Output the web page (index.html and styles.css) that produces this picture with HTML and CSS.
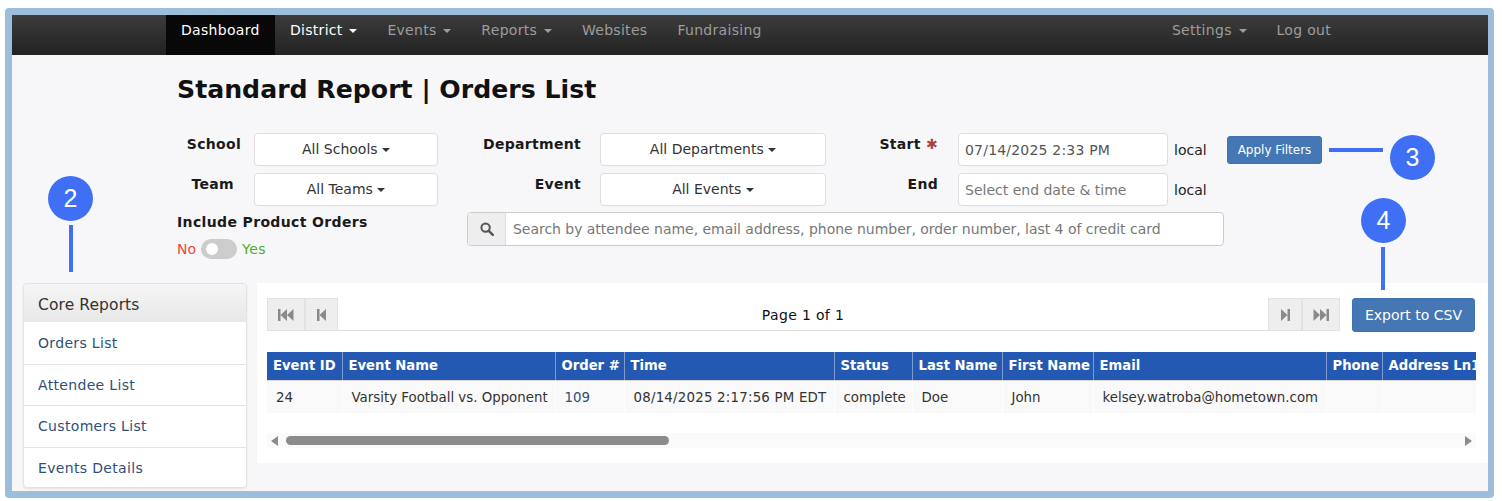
FILE: index.html
```html
<!DOCTYPE html>
<html lang="en">
<head>
<meta charset="utf-8">
<title>Standard Report | Orders List</title>
<link rel="stylesheet" href="styles.css">
</head>
<body>
<div class="frame">
  <nav class="nav">
    <div class="nav-group">
      <a class="nav-item active">Dashboard</a>
      <a class="nav-item bright">District <i class="caret"></i></a>
      <a class="nav-item">Events <i class="caret"></i></a>
      <a class="nav-item">Reports <i class="caret"></i></a>
      <a class="nav-item">Websites</a>
      <a class="nav-item">Fundraising</a>
    </div>
    <div class="nav-group">
      <a class="nav-item">Settings <i class="caret"></i></a>
      <a class="nav-item">Log out</a>
    </div>
  </nav>

  <main class="content">
    <h1 class="title">Standard Report | Orders List</h1>
    <div class="filters">
      <label class="flabel pad-a">School</label>
      <button class="select">All Schools <i class="caret small"></i></button>
      <label class="flabel pad-b">Department</label>
      <button class="select">All Departments <i class="caret small"></i></button>
      <label class="flabel pad-c">Start <span class="req">✱</span></label>
      <div class="input value">07/14/2025 2:33 PM</div>
      <span class="local">local</span>
      <button class="apply">Apply Filters</button>

      <label class="flabel pad-a team">Team</label>
      <button class="select">All Teams <i class="caret small"></i></button>
      <label class="flabel pad-b">Event</label>
      <button class="select">All Events <i class="caret small"></i></button>
      <label class="flabel pad-c">End</label>
      <div class="input">Select end date &amp; time</div>
      <span class="local">local</span>
      <span></span>

      <div class="product">
        <div class="product-title">Include Product Orders</div>
        <div class="toggle-row">
          <span class="no">No</span>
          <span class="toggle"><span class="knob"></span></span>
          <span class="yes">Yes</span>
        </div>
      </div>
      <div class="search">
        <span class="search-addon">
          <svg width="14" height="14" viewBox="0 0 14 14"><circle cx="5.6" cy="5.6" r="4.2" fill="none" stroke="#555" stroke-width="2"/><path d="M8.8 8.8 12.8 12.8" stroke="#555" stroke-width="2.4" stroke-linecap="round"/></svg>
        </span>
        <span class="search-text">Search by attendee name, email address, phone number, order number, last 4 of credit card</span>
      </div>
    </div>

    <div class="lower">
      <aside class="side">
        <div class="side-head">Core Reports</div>
        <a class="side-link">Orders List</a>
        <a class="side-link">Attendee List</a>
        <a class="side-link">Customers List</a>
        <a class="side-link">Events Details</a>
      </aside>

      <section class="panel">
        <div class="pager">
          <button class="pg pg-first">
            <svg width="16" height="12" viewBox="0 0 16 12"><path d="M0 0h2.500v12H0zM9 0v12L2.500 6zM15.500 0v12L9 6z" fill="#8a8a8a"/></svg>
          </button>
          <button class="pg pg-prev">
            <svg width="9" height="12" viewBox="0 0 9 12"><path d="M0 0h2.500v12H0zM9 0v12L2.500 6z" fill="#8a8a8a"/></svg>
          </button>
          <div class="pg-label">Page 1 of 1</div>
          <button class="pg pg-next">
            <svg width="9" height="12" viewBox="0 0 9 12"><path d="M9 0H6.500v12H9zM0 0v12L6.500 6z" fill="#8a8a8a"/></svg>
          </button>
          <button class="pg pg-first">
            <svg width="16" height="12" viewBox="0 0 16 12"><path d="M16 0h-2.500v12H16zM7 0v12L13.500 6zM.5 0v12L7 6z" fill="#8a8a8a"/></svg>
          </button>
          <button class="export">Export to CSV</button>
        </div>

        <div class="table-wrap">
          <table class="orders">
            <colgroup>
              <col class="c-id"><col class="c-name"><col class="c-order"><col class="c-time"><col class="c-status"><col class="c-last"><col class="c-first"><col class="c-email"><col class="c-phone"><col class="c-addr">
            </colgroup>
            <thead>
              <tr>
                <th>Event ID</th><th>Event Name</th><th>Order #</th><th>Time</th><th>Status</th><th>Last Name</th><th>First Name</th><th>Email</th><th class="right">Phone</th><th>Address Ln1</th>
              </tr>
            </thead>
            <tbody>
              <tr>
                <td>24</td><td>Varsity Football vs. Opponent</td><td><a class="order-link">109</a></td><td class="time">08/14/2025 2:17:56 PM EDT</td><td>complete</td><td>Doe</td><td>John</td><td>kelsey.watroba@hometown.com</td><td></td><td></td>
              </tr>
            </tbody>
          </table>
        </div>

        <div class="hscroll">
          <i class="arrow-left"></i>
          <span class="thumb"></span>
          <i class="arrow-right"></i>
        </div>
      </section>
    </div>
  </main>

  <div class="badge badge-2">2</div>
  <div class="stem stem-2"></div>
  <div class="badge badge-3">3</div>
  <div class="stem stem-3"></div>
  <div class="badge badge-4">4</div>
  <div class="stem stem-4"></div>
</div>
</body>
</html>
```

FILE: styles.css
```css
* { box-sizing: border-box; }

html, body { margin: 0; padding: 0; background: #fff; }

body {
  font-family: "DejaVu Sans", Verdana, sans-serif;
  font-size: 14px;
  color: #222;
  overflow: hidden;
}

.frame {
  position: relative;
  width: 1489px;
  height: 490px;
  margin: 8px 0 0 5px;
  border: 7px solid #9dbedb;
  border-right-width: 6px;
  border-radius: 4px;
  background: #f7f7fa;
  overflow: hidden;
}

.nav {
  display: flex;
  justify-content: space-between;
  height: 40px;
  padding: 0 142px 0 154px;
  background: linear-gradient(#3c3c3c, #222);
}

.nav-group { display: flex; }

.nav-item {
  display: block;
  padding: 0 15px;
  line-height: 30px;
  letter-spacing: .3px;
  color: #9d9d9d;
  white-space: nowrap;
}

.nav-item.active { background: #080808; color: #fff; padding-right: 15.300px; }
.nav-item.bright { color: #fff; }

.caret {
  display: inline-block;
  width: 0;
  height: 0;
  margin-left: 2px;
  vertical-align: middle;
  border-top: 4px solid currentColor;
  border-left: 4px solid transparent;
  border-right: 4px solid transparent;
}

.caret.small { margin-left: 0; }

.content { padding-top: 20px; }

.title {
  margin: 0 0 29px 165px;
  font-size: 25.200px;
  line-height: 29px;
  font-weight: 700;
  color: #111;
}

.filters {
  display: grid;
  grid-template-columns: 77px 184px 162px 226px 132px 210px 59px 95px;
  grid-template-rows: 33px 33px auto;
  row-gap: 7px;
  margin-left: 165px;
}

.flabel {
  font-weight: 700;
  text-align: right;
  color: #1a1a1a;
  line-height: 20px;
  padding-top: 1px;
  letter-spacing: .3px;
}

.pad-a { padding-right: 13px; }
.pad-b { padding-right: 19px; }
.pad-c { padding-right: 20px; }
.team { padding-right: 20px; }

.req { color: #a94442; font-weight: 400; }

.select,
.input {
  height: 33px;
  border: 1px solid #ddd;
  border-radius: 4px;
  background: #fff;
  font: inherit;
  color: #333;
}

.select { padding: 0 0 2px; text-align: center; }

.input {
  padding: 0 6px;
  line-height: 32px;
  color: #777;
  white-space: nowrap;
}

.input.value { color: #555; letter-spacing: .2px; }

.local {
  padding-left: 6px;
  line-height: 35px;
  color: #222;
}

.apply {
  align-self: center;
  width: 95px;
  height: 28px;
  padding: 0;
  border: 1px solid #3f74b0;
  border-radius: 3px;
  background: #4477b3;
  color: #fff;
  font: inherit;
  font-size: 12px;
}

.product { grid-column: 1 / 3; margin-top: -1px; }

.product-title {
  font-weight: 700;
  line-height: 20px;
  letter-spacing: .36px;
  color: #1a1a1a;
}

.toggle-row {
  display: flex;
  align-items: center;
  gap: 5px;
  margin-top: 7px;
}

.no { color: #f44336; }
.yes { color: #4caf2a; letter-spacing: .4px; }

.toggle {
  display: block;
  width: 36px;
  height: 20px;
  padding: 4px 5px;
  border-radius: 10px;
  background: #ccc;
}

.knob {
  display: block;
  width: 12px;
  height: 12px;
  border-radius: 50%;
  background: #fff;
}

.search {
  grid-column: 3 / 8;
  display: flex;
  align-self: start;
  height: 34px;
  margin: -1px 3px 0 29px;
  border: 1px solid #ccc;
  border-radius: 4px;
  background: #fff;
  overflow: hidden;
}

.search-addon {
  display: flex;
  align-items: center;
  justify-content: center;
  width: 38px;
  border-right: 1px solid #ddd;
  background: #eee;
}

.search-text {
  padding-left: 7px;
  line-height: 32px;
  letter-spacing: -.035px;
  color: #777;
  white-space: nowrap;
}

.lower {
  display: flex;
  gap: 10px;
  align-items: flex-start;
  margin: 24px 0 0 11px;
}

.side {
  flex: none;
  width: 224px;
  height: 205px;
  border: 1px solid #e3e3e3;
  border-radius: 4px;
  background: #fff;
  overflow: hidden;
  box-shadow: 0 1px 2px rgba(0, 0, 0, .08);
}

.side-head {
  height: 38px;
  padding-left: 14px;
  line-height: 42px;
  font-size: 15.500px;
  letter-spacing: .1px;
  color: #333;
  background: linear-gradient(#f5f5f5, #e8e8e8);
}

.side-link {
  display: block;
  height: 41.500px;
  padding-left: 14px;
  line-height: 40px;
  letter-spacing: .33px;
  color: #2f4f78;
  border-top: 1px solid #e4e4e4;
}

.side-head + .side-link { border-top: 0; line-height: 43px; }

.panel {
  flex: 1;
  min-width: 0;
  height: 180px;
  padding: 15px 12px 0 10px;
  background: #fff;
}

.pager {
  display: flex;
  align-items: flex-start;
  height: 34px;
  margin-right: 1px;
}

.pg {
  display: flex;
  align-items: center;
  justify-content: center;
  flex: none;
  height: 33px;
  padding: 0;
  border: 1px solid #e2e2e2;
  background: #eee;
}

.pg-first { width: 38px; }
.pg-prev { width: 33px; }
.pg-next { width: 34px; }

.pg-label {
  flex: 1;
  height: 33px;
  line-height: 35px;
  text-align: center;
  color: #111;
  letter-spacing: .35px;
  border-bottom: 1px solid #ddd;
}

.export {
  flex: none;
  width: 123px;
  height: 34px;
  margin-left: 12px;
  padding: 0 0 1px;
  border: 1px solid #3f74b0;
  border-radius: 3px;
  background: #4477b3;
  color: #fff;
  font: inherit;
}

.table-wrap {
  margin-top: 20px;
  overflow: hidden;
}

.orders {
  table-layout: fixed;
  width: 1240px;
  border-collapse: collapse;
  font-size: 13.350px;
}

.c-id { width: 75px; }
.c-name { width: 213px; }
.c-order { width: 69px; }
.c-time { width: 210px; }
.c-status { width: 78px; }
.c-last { width: 90px; }
.c-first { width: 91px; }
.c-email { width: 233px; }
.c-phone { width: 56px; }
.c-addr { width: 125px; }

.orders th {
  height: 28px;
  padding: 0 6px;
  background: #2459b3;
  border-left: 1px solid #7f9bcc;
  border-bottom: 1px solid #d8d8d8;
  color: #fff;
  font-size: 13.200px;
  font-weight: 700;
  text-align: left;
  white-space: nowrap;
  overflow: hidden;
}

.orders th:first-child,
.orders td:first-child { border-left: 0; }

.orders th.right { text-align: right; padding-right: 4px; }

.orders td {
  height: 33px;
  padding: 2px 9px 0;
  background: #f9f9f9;
  border-left: 1px solid #fff;
  color: #333;
  white-space: nowrap;
  overflow: hidden;
}

.orders td.time { letter-spacing: .22px; }

.order-link { color: #2f4f78; }

.hscroll {
  display: flex;
  align-items: center;
  height: 15px;
  margin-top: 20px;
  padding: 0 4px;
  background: #fafafa;
}

.arrow-left {
  width: 0;
  height: 0;
  border-top: 5px solid transparent;
  border-bottom: 5px solid transparent;
  border-right: 7px solid #8b8b8b;
}

.thumb {
  width: 383px;
  height: 9px;
  margin-left: 8px;
  border-radius: 5px;
  background: #8b8b8b;
}

.arrow-right {
  width: 0;
  height: 0;
  margin-left: auto;
  border-top: 5px solid transparent;
  border-bottom: 5px solid transparent;
  border-left: 7px solid #8b8b8b;
}

.badge {
  position: absolute;
  width: 45px;
  height: 45px;
  border-radius: 50%;
  background: #3f6ff5;
  color: #fff;
  font-family: "Liberation Sans", Arial, sans-serif;
  font-size: 25px;
  line-height: 45px;
  text-align: center;
}

.stem { position: absolute; background: #3f6ff5; }

.badge-2 { left: 36px; top: 161px; }
.stem-2 { left: 57px; top: 210px; width: 4px; height: 47px; }
.badge-3 { left: 1378px; top: 120px; }
.stem-3 { left: 1317px; top: 133px; width: 54px; height: 4px; }
.badge-4 { left: 1349px; top: 183px; }
.stem-4 { left: 1369px; top: 232px; width: 4px; height: 43px; }
```
